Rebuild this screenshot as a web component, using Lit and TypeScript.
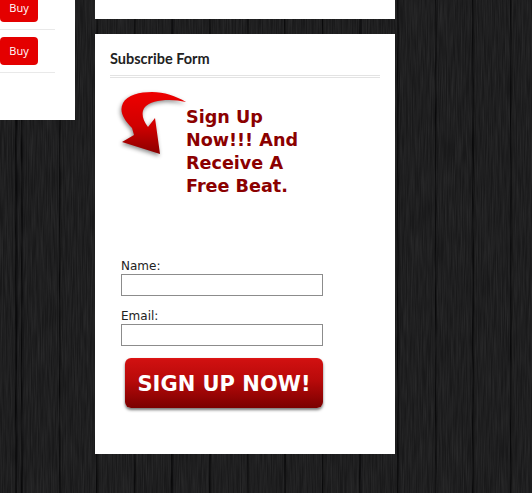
import { LitElement, html, css, unsafeCSS } from "lit";
import { customElement } from "lit/decorators.js";

const grain = `url("data:image/svg+xml,%3Csvg xmlns='http://www.w3.org/2000/svg' width='532' height='493'%3E%3Cfilter id='n' x='0' y='0' width='100%25' height='100%25'%3E%3CfeTurbulence type='fractalNoise' baseFrequency='0.8 0.03' numOctaves='2' seed='4'/%3E%3CfeColorMatrix values='0 0 0 0 1 0 0 0 0 1 0 0 0 0 1 0.12 0 0 0 -0.035'/%3E%3C/filter%3E%3Crect width='532' height='493' filter='url(%23n)'/%3E%3C/svg%3E")`;

@customElement("app-root")
export class AppRoot extends LitElement {
  static styles = css`
    :host {
      display: block;
      width: 532px;
      height: 493px;
      overflow: hidden;
      background-color: #19191a;
      background-image:
        ${unsafeCSS(grain)},
        repeating-linear-gradient(90deg, #09090a 0, #09090a 1px, #131314 2px, transparent 3px, transparent 37.6px);
      background-position: 0 0, 21px 0;
      font-family: "DejaVu Sans", sans-serif;
    }
    .page {
      display: flex;
      gap: 20px;
      align-items: flex-start;
    }
    .shop {
      width: 75px;
      height: 120px;
      background: #fff;
      box-sizing: border-box;
      padding-right: 20px;
    }
    .item {
      height: 35px;
      border-bottom: 1px solid #e9e9e9;
      margin-bottom: 7px;
    }
    .item:first-child {
      margin-top: -6px;
    }
    .buy {
      display: block;
      width: 38px;
      height: 28px;
      box-sizing: border-box;
      padding: 0;
      border: 0;
      border-radius: 4px;
      background: #e40000;
      color: #fff;
      font: 11px/28px "Open Sans", sans-serif;
      text-align: center;
    }
    .main {
      width: 300px;
      display: flex;
      flex-direction: column;
      gap: 15px;
    }
    .stub {
      height: 19px;
      background: #fff;
    }
    .card {
      height: 420px;
      box-sizing: border-box;
      background: #fff;
      padding: 16px 15px 0;
    }
    h3 {
      margin: 0;
      height: 28px;
      box-sizing: border-box;
      font: 700 14.5px/18px "Lato", sans-serif;
      color: #222;
      border-bottom: 3px double #e3e3e3;
    }
    .promo {
      display: flex;
      align-items: flex-start;
      height: 170px;
      padding: 11px 0 0 10px;
    }
    .arrow {
      width: 66px;
      height: 66px;
      flex: none;
      overflow: visible;
      filter: drop-shadow(-1px 2px 2px rgba(0, 0, 0, 0.45));
    }
    .promo p {
      margin: 17px 0 0;
      width: 130px;
      font-weight: 700;
      font-size: 17.6px;
      line-height: 23px;
      color: #8b0000;
    }
    form {
      padding-left: 11px;
      display: flex;
      flex-direction: column;
      align-items: flex-start;
    }
    label {
      font-size: 12px;
      line-height: 15px;
      color: #222;
    }
    input + label {
      margin-top: 1px;
    }
    input {
      display: block;
      width: 202px;
      height: 22px;
      box-sizing: border-box;
      border: 1px solid #8c8c8c;
      border-radius: 0;
      margin: 0 0 12px;
      padding: 0 2px;
      background: #fff;
    }
    .submit {
      width: 198px;
      height: 50px;
      box-sizing: border-box;
      margin: 0 0 0 4px;
      padding: 3px 0 0;
      border: 0;
      border-radius: 6px;
      background: linear-gradient(#e01515 0, #cf1010 5%, #b80a0a 45%, #7a0000 100%);
      box-shadow: 0 2px 3px rgba(0, 0, 0, 0.55);
      color: #fff;
      font: 700 21px/47px "DejaVu Sans", sans-serif;
    }
  `;

  render() {
    return html`
      <div class="page">
        <aside class="shop">
          <div class="item"><button class="buy">Buy</button></div>
          <div class="item"><button class="buy">Buy</button></div>
        </aside>
        <main class="main">
          <div class="stub"></div>
          <section class="card">
            <h3>Subscribe Form</h3>
            <div class="promo">
              <svg class="arrow" viewBox="0 0 66 66" aria-hidden="true">
                <defs>
                  <linearGradient id="red" x1="0" y1="0" x2="0" y2="1">
                    <stop offset="0" stop-color="#ee0000" />
                    <stop offset="0.55" stop-color="#d00000" />
                    <stop offset="1" stop-color="#8a0000" />
                  </linearGradient>
                </defs>
                <path
                  fill="url(#red)"
                  d="M66 13 C56 7 44 3 32 3 C20 3 7 6 3 14 C-1 22 3 30 12 39 L14 46 L2 53 L40 65 L35 29 L28 38 C22 30 21 23 25 18 C31 11 50 9 66 13 Z"
                />
              </svg>
              <p>Sign Up Now!!! And Receive A Free Beat.</p>
            </div>
            <form>
              <label for="n">Name:</label>
              <input id="n" type="text" />
              <label for="e">Email:</label>
              <input id="e" type="email" />
              <button class="submit" type="button">SIGN UP NOW!</button>
            </form>
          </section>
        </main>
      </div>
    `;
  }
}
